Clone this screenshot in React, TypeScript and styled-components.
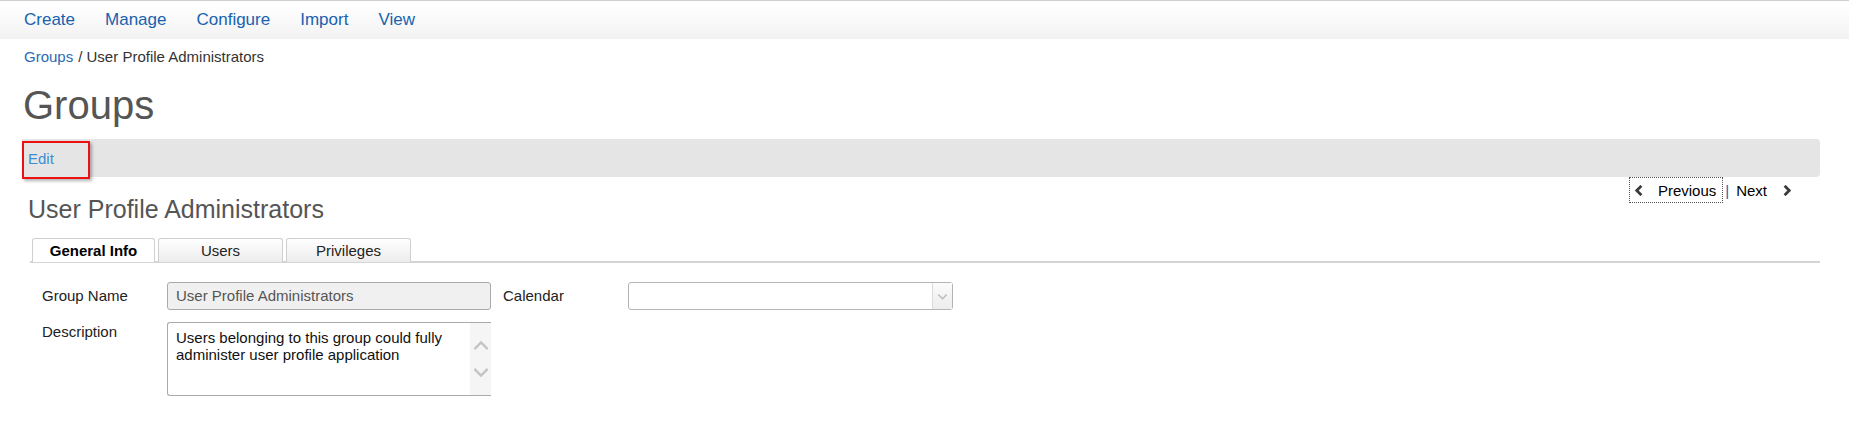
import React from "react";
import styled, { createGlobalStyle } from "styled-components";

const GlobalStyle = createGlobalStyle`
  body {
    margin: 0;
    background: #ffffff;
    font-family: "Liberation Sans", Arial, sans-serif;
    color: #222;
  }
`;

const TopNav = styled.nav`
  height: 38px;
  border-top: 1px solid #cfcfcf;
  background: linear-gradient(#ffffff 10%, #f2f2f2 100%);
  display: flex;
  align-items: center;
  padding-left: 9px;
`;

const NavItem = styled.a`
  font-size: 17px;
  line-height: 38px;
  padding: 0 15px;
  color: #1862b0;
  text-decoration: none;
`;

const Page = styled.div`
  padding-left: 22px;
  padding-right: 29px;
`;

const Crumbs = styled.div`
  margin-top: 8px;
  padding-left: 2px;
  font-size: 15px;
  line-height: 20px;
  color: #333;
`;

const CrumbLink = styled.a`
  color: #2a6ab4;
  text-decoration: none;
  margin-right: 5px;
`;

const PageTitle = styled.h1`
  margin: 16px 0 0 1px;
  font-size: 40px;
  line-height: 44px;
  font-weight: normal;
  color: #555;
`;

const ActionBar = styled.div`
  margin-top: 12px;
  height: 38px;
  background: #e5e5e5;
  border-radius: 0 4px 4px 0;
  display: flex;
  align-items: flex-start;
`;

const EditAction = styled.a`
  box-sizing: border-box;
  margin-top: 2px;
  width: 68px;
  height: 38px;
  border: 2px solid #ee1111;
  box-shadow: 2px 2px 3px rgba(0, 0, 0, 0.3);
  padding: 6px 0 0 4px;
  font-size: 15px;
  line-height: 20px;
  color: #3b8ed6;
  text-decoration: none;
`;

const HeadRow = styled.div`
  display: flex;
  justify-content: space-between;
  align-items: flex-start;
`;

const RecordTitle = styled.h2`
  margin: 17px 0 0 6px;
  font-size: 25px;
  line-height: 30px;
  font-weight: normal;
  color: #555;
`;

const Pager = styled.div`
  display: flex;
  align-items: center;
  margin-right: 21px;
  font-size: 15px;
  color: #000;
`;

const PagerButton = styled.span<{ $focused?: boolean }>`
  box-sizing: border-box;
  display: flex;
  align-items: center;
  height: 26px;
  padding: 0 6px 0 4px;
  border: 1px dotted ${(p) => (p.$focused ? "#555" : "transparent")};
  gap: ${(p) => (p.$focused ? "13px" : "14px")};
`;

const PagerSep = styled.span`
  color: #1a5fb0;
  margin: 0 2px;
`;

const TabStrip = styled.div`
  margin: 14px 0 0 8px;
  padding-left: 2px;
  display: flex;
  gap: 3px;
  border-bottom: 2px solid #d4d4d4;
`;

const Tab = styled.div<{ $active?: boolean }>`
  box-sizing: border-box;
  width: ${(p) => (p.$active ? "123px" : "125px")};
  height: 24px;
  margin-bottom: -1px;
  border: 1px solid #cfcfcf;
  border-bottom: none;
  border-radius: 3px 3px 0 0;
  background: ${(p) =>
    p.$active ? "#ffffff" : "linear-gradient(#ffffff, #ececec)"};
  text-align: center;
  font-size: 15px;
  line-height: 24px;
  font-weight: ${(p) => (p.$active ? "bold" : "normal")};
  color: ${(p) => (p.$active ? "#000" : "#222")};
`;

const Form = styled.div`
  margin-top: 19px;
  padding-left: 20px;
  display: grid;
  grid-template-columns: 125px 324px 12px 125px 325px;
  row-gap: 12px;
`;

const Label = styled.div<{ $top?: boolean }>`
  font-size: 15px;
  line-height: 20px;
  color: #222;
  align-self: ${(p) => (p.$top ? "start" : "center")};
`;

const ReadonlyInput = styled.div`
  box-sizing: border-box;
  height: 28px;
  border: 1px solid #aaa;
  border-radius: 3px;
  background: #f0f0f0;
  padding-left: 8px;
  font-size: 15px;
  line-height: 26px;
  color: #555;
`;

const Select = styled.div`
  box-sizing: border-box;
  height: 28px;
  border: 1px solid #b4b4b4;
  border-radius: 3px;
  display: flex;
  justify-content: flex-end;
  background: #fff;
`;

const SelectArrow = styled.span`
  width: 19px;
  border-left: 1px solid #dcdcdc;
  background: linear-gradient(#fbfbfb, #ededed);
  display: flex;
  align-items: center;
  justify-content: center;
`;

const TextBox = styled.div`
  box-sizing: border-box;
  height: 74px;
  border: 1px solid #aaa;
  border-right: none;
  border-radius: 3px 0 0 3px;
  display: flex;
`;

const TextBody = styled.div`
  flex: 1;
  padding: 6px 8px;
  font-size: 15px;
  line-height: 17px;
  color: #111;
`;

const ScrollTrack = styled.div`
  width: 21px;
  background: #f5f5f5;
  display: flex;
  flex-direction: column;
  align-items: center;
  justify-content: center;
  gap: 12px;
`;

const Chevron = ({
  dir,
  size = 10,
  color = "#333",
  width = 3,
}: {
  dir: "left" | "right" | "up" | "down";
  size?: number;
  color?: string;
  width?: number;
}) => {
  const pts = {
    left: "7,2 3,6 7,10",
    right: "5,2 9,6 5,10",
    up: "1,8 6,3 11,8",
    down: "1,4 6,9 11,4",
  }[dir];
  return (
    <svg width={size} height={size} viewBox="0 0 12 12">
      <polyline
        points={pts}
        fill="none"
        stroke={color}
        strokeWidth={width}
        strokeLinecap="square"
      />
    </svg>
  );
};

const navItems = ["Create", "Manage", "Configure", "Import", "View"];

export default function App() {
  return (
    <>
      <GlobalStyle />
      <TopNav>
        {navItems.map((n) => (
          <NavItem key={n}>{n}</NavItem>
        ))}
      </TopNav>
      <Page>
        <Crumbs>
          <CrumbLink>Groups</CrumbLink>/ User Profile Administrators
        </Crumbs>
        <PageTitle>Groups</PageTitle>
        <ActionBar>
          <EditAction>Edit</EditAction>
        </ActionBar>
        <HeadRow>
          <RecordTitle>User Profile Administrators</RecordTitle>
          <Pager>
            <PagerButton $focused>
              <Chevron dir="left" size={11} color="#3a3a3a" />
              Previous
            </PagerButton>
            <PagerSep>|</PagerSep>
            <PagerButton>
              Next
              <Chevron dir="right" size={11} color="#3a3a3a" />
            </PagerButton>
          </Pager>
        </HeadRow>
        <TabStrip>
          <Tab $active>General Info</Tab>
          <Tab>Users</Tab>
          <Tab>Privileges</Tab>
        </TabStrip>
        <Form>
          <Label>Group Name</Label>
          <ReadonlyInput>User Profile Administrators</ReadonlyInput>
          <span />
          <Label>Calendar</Label>
          <Select>
            <SelectArrow>
              <Chevron dir="down" size={9} color="#bbb" width={2} />
            </SelectArrow>
          </Select>
          <Label $top>Description</Label>
          <TextBox>
            <TextBody>
              Users belonging to this group could fully administer user
              profile application
            </TextBody>
            <ScrollTrack>
              <Chevron dir="up" size={14} color="#c4c4c4" width={2} />
              <Chevron dir="down" size={14} color="#c4c4c4" width={2} />
            </ScrollTrack>
          </TextBox>
        </Form>
      </Page>
    </>
  );
}
